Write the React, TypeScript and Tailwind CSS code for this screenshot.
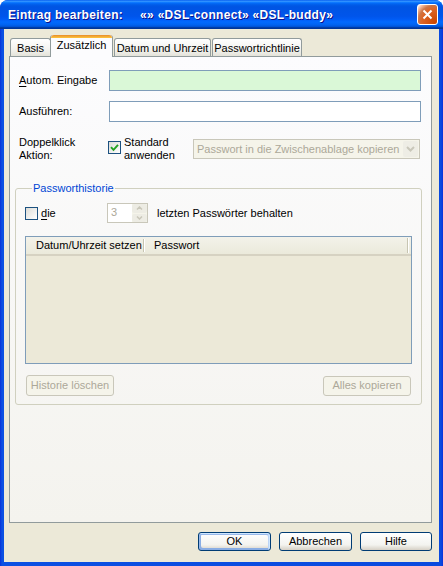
import type { ReactNode } from "react";

const tabs = [
  { label: "Basis", width: "w-[41px]", active: false },
  { label: "Zusätzlich", width: "w-[63px]", active: true },
  { label: "Datum und Uhrzeit", width: "w-[97px]", active: false },
  { label: "Passwortrichtlinie", width: "w-[90px]", active: false },
];

function CheckBox({ checked }: { checked?: boolean }) {
  return (
    <span className="grid h-[13px] w-[13px] shrink-0 place-items-center border border-[#1C5180] bg-[linear-gradient(135deg,#DCDCD7,#FFFFFF)]">
      {checked && (
        <svg width="9" height="9" viewBox="0 0 9 9" aria-hidden="true">
          <path d="M1 4.2 L3.5 6.8 L8 1.8" stroke="#21A121" strokeWidth="1.9" fill="none" />
        </svg>
      )}
    </span>
  );
}

function Button({
  children,
  disabled,
  isDefault,
  className = "",
}: {
  children: ReactNode;
  disabled?: boolean;
  isDefault?: boolean;
  className?: string;
}) {
  const look = disabled
    ? "border-[#C9C7BA] bg-[#F5F4EA] text-[#ACA899]"
    : "border-[#003C74] bg-[linear-gradient(to_bottom,#FFFFFF,#F3F3EF_70%,#D6D0C5)] text-black";
  const focus = isDefault
    ? "shadow-[inset_-1px_1px_#CEE7FF,inset_1px_2px_#98B8EA,inset_-2px_2px_#BCD4F6,inset_1px_-1px_#89ADE4,inset_2px_-2px_#89ADE4]"
    : "";
  return (
    <div className={`flex items-center justify-center rounded-[3px] border ${look} ${focus} ${className}`}>
      {children}
    </div>
  );
}

function ChevronDown({ color }: { color: string }) {
  return (
    <svg width="9" height="6" viewBox="0 0 9 6" aria-hidden="true">
      <path d="M1 1 L4.5 4.5 L8 1" stroke={color} strokeWidth="2" fill="none" />
    </svg>
  );
}

export default function App() {
  return (
    <div className="h-[566px] w-[443px] bg-white font-['Liberation_Sans',Arial,sans-serif] text-[11px] leading-[13px] text-black">
      <div className="flex h-full flex-col overflow-hidden rounded-t-[8px] bg-[linear-gradient(to_right,#0831D9,#0B50E3_2px,#0A4ADF_calc(100%-2px),#0831D9)]">
        {/* title bar */}
        <div className="flex h-[29px] shrink-0 items-center justify-between bg-[linear-gradient(to_bottom,#0058EE_0%,#3593FF_4%,#288EFF_6%,#127DFF_8%,#036FFC_10%,#0262EE_14%,#0057E5_20%,#0054E3_24%,#0055EB_56%,#005BF5_66%,#026AFE_76%,#0062EF_86%,#0052D6_92%,#0040AB_94%,#003092_100%)] pl-[8px] pr-[5px]">
          <div className="flex items-center pt-[1px] font-['Liberation_Sans',Arial,sans-serif] text-[12px] font-bold tracking-[0.3px] text-white [text-shadow:1px_1px_#0F1089]">
            <span>Eintrag bearbeiten:</span>
            <span className="ml-[17px]">«» «DSL-connect» «DSL-buddy»</span>
          </div>
          <div className="grid h-[21px] w-[21px] place-items-center rounded-[3px] border border-white bg-[radial-gradient(circle_at_90%_90%,#CC4600_0%,#DC6527_55%,#CD7546_70%,#FFCCB2_90%,#FFFFFF_100%)]">
            <svg width="11" height="11" viewBox="0 0 11 11" aria-hidden="true">
              <path d="M1.5 1.5 L9.5 9.5 M9.5 1.5 L1.5 9.5" stroke="#FFFFFF" strokeWidth="2" />
            </svg>
          </div>
        </div>

        {/* client area */}
        <div className="mx-[4px] mb-[4px] flex flex-1 flex-col bg-[#ECE9D8] pl-[5px] pr-[7px] pt-[6px]">
          <div className="relative z-10 flex items-end pl-[1px]">
            {tabs.map((tab) =>
              tab.active ? (
                <div
                  key={tab.label}
                  className={`${tab.width} -ml-px flex h-[22px] flex-col rounded-t-[3px] border-x border-[#919B9C] bg-[#FCFCFE]`}
                >
                  <div className="h-[3px] rounded-t-[3px] bg-[linear-gradient(to_bottom,#E68B2C,#FFC73C)]" />
                  <div className="flex flex-1 items-start justify-center pt-[1px]">{tab.label}</div>
                </div>
              ) : (
                <div
                  key={tab.label}
                  className={`${tab.width} mb-px ml-px flex h-[18px] items-center justify-center rounded-t-[3px] border border-b-0 border-[#919B9C] bg-[linear-gradient(to_bottom,#FFFFFF,#F3F3EF_60%,#E4E3DA)] pt-[2px] first:ml-0`}
                >
                  {tab.label}
                </div>
              ),
            )}
          </div>

          {/* tab page */}
          <div className="-mt-px flex flex-1 flex-col border border-[#919B9C] bg-[linear-gradient(to_bottom,#FCFCFE,#F4F3EE)] pl-[9px] pr-[10px] pt-[13px]">
            <div className="flex h-[21px] items-center">
              <span className="w-[90px]">
                <span className="underline underline-offset-[2px]">A</span>utom. Eingabe
              </span>
              <div className="h-[21px] w-[312px] border border-[#7F9DB9] bg-[#DAF8D7]" />
            </div>

            <div className="mt-[10px] flex h-[21px] items-center">
              <span className="w-[90px]">Ausführen:</span>
              <div className="h-[21px] w-[312px] border border-[#7F9DB9] bg-white" />
            </div>

            <div className="mt-[14px] flex">
              <span className="w-[89px]">
                Doppelklick
                <br />
                Aktion:
              </span>
              <div className="mt-[5px]">
                <CheckBox checked />
              </div>
              <span className="ml-[3px] w-[69px]">
                Standard
                <br />
                anwenden
              </span>
              <div className="mt-[3px] flex h-[20px] w-[227px] items-center border border-[#C9C7BA] bg-[#F5F4EA] pl-[3px] pr-[1px] text-[#ACA899]">
                <span className="flex-1 overflow-hidden whitespace-nowrap">Passwort in die Zwischenablage kopieren</span>
                <div className="grid h-[16px] w-[15px] shrink-0 place-items-center rounded-[2px] bg-[#EEEDE5]">
                  <ChevronDown color="#C9C7BA" />
                </div>
              </div>
            </div>

            {/* Passworthistorie */}
            <fieldset className="mt-[20px] -ml-[4px] rounded-[3px] border border-[#D0D0BF] pb-[8px] pl-[9px] pr-[9px]">
              <legend className="ml-[7px] px-[1px] text-[#0046D5]">Passworthistorie</legend>

              <div className="mt-[8px] flex h-[20px] items-center">
                <div className="flex w-[82px] items-center">
                  <CheckBox />
                  <span className="ml-[3px]">
                    <span className="underline underline-offset-[2px]">d</span>ie
                  </span>
                </div>
                <div className="flex h-[20px] w-[41px] border border-[#C9C7BA] bg-white">
                  <span className="flex-1 pl-[3px] pt-[2px] text-[#ACA899]">3</span>
                  <div className="flex w-[15px] flex-col gap-px bg-[#F5F4EA]">
                    <div className="grid flex-1 place-items-center rounded-[2px] bg-[#EDECE4]">
                      <svg width="7" height="4" viewBox="0 0 7 4" aria-hidden="true">
                        <path d="M1 3.5 L3.5 1 L6 3.5" stroke="#C9C7BA" strokeWidth="1.5" fill="none" />
                      </svg>
                    </div>
                    <div className="grid flex-1 place-items-center rounded-[2px] bg-[#EDECE4]">
                      <svg width="7" height="4" viewBox="0 0 7 4" aria-hidden="true">
                        <path d="M1 0.5 L3.5 3 L6 0.5" stroke="#C9C7BA" strokeWidth="1.5" fill="none" />
                      </svg>
                    </div>
                  </div>
                </div>
                <span className="ml-[9px]">letzten Passwörter behalten</span>
              </div>

              <div className="mt-[13px] flex h-[128px] w-[387px] flex-col border border-[#7F9DB9] bg-[#ECE9D8]">
                <div className="flex h-[19px] items-center border-b-2 border-[#D6D2C2] bg-[linear-gradient(to_bottom,#F3F2EA,#EBEADB)]">
                  <span className="w-[117px] pl-[10px]">Datum/Uhrzeit setzen</span>
                  <span className="h-[13px] w-[2px] border-l border-r border-l-[#C7C5B2] border-r-white" />
                  <span className="flex-1 pl-[9px]">Passwort</span>
                  <span className="mr-[2px] h-[15px] w-[2px] border-l border-r border-l-[#C7C5B2] border-r-white" />
                </div>
              </div>

              <div className="mt-[11px] flex items-center justify-between pl-[1px] pr-[1px]">
                <Button disabled className="h-[21px] w-[88px]">
                  Historie löschen
                </Button>
                <Button disabled className="h-[20px] w-[88px]">
                  Alles kopieren
                </Button>
              </div>
            </fieldset>
          </div>

          {/* dialog buttons */}
          <div className="flex justify-end gap-[8px] pb-[11px] pt-[9px]">
            <Button isDefault className="h-[19px] w-[73px]">
              OK
            </Button>
            <Button className="h-[19px] w-[73px]">Abbrechen</Button>
            <Button className="h-[19px] w-[72px]">Hilfe</Button>
          </div>
        </div>
      </div>
    </div>
  );
}
